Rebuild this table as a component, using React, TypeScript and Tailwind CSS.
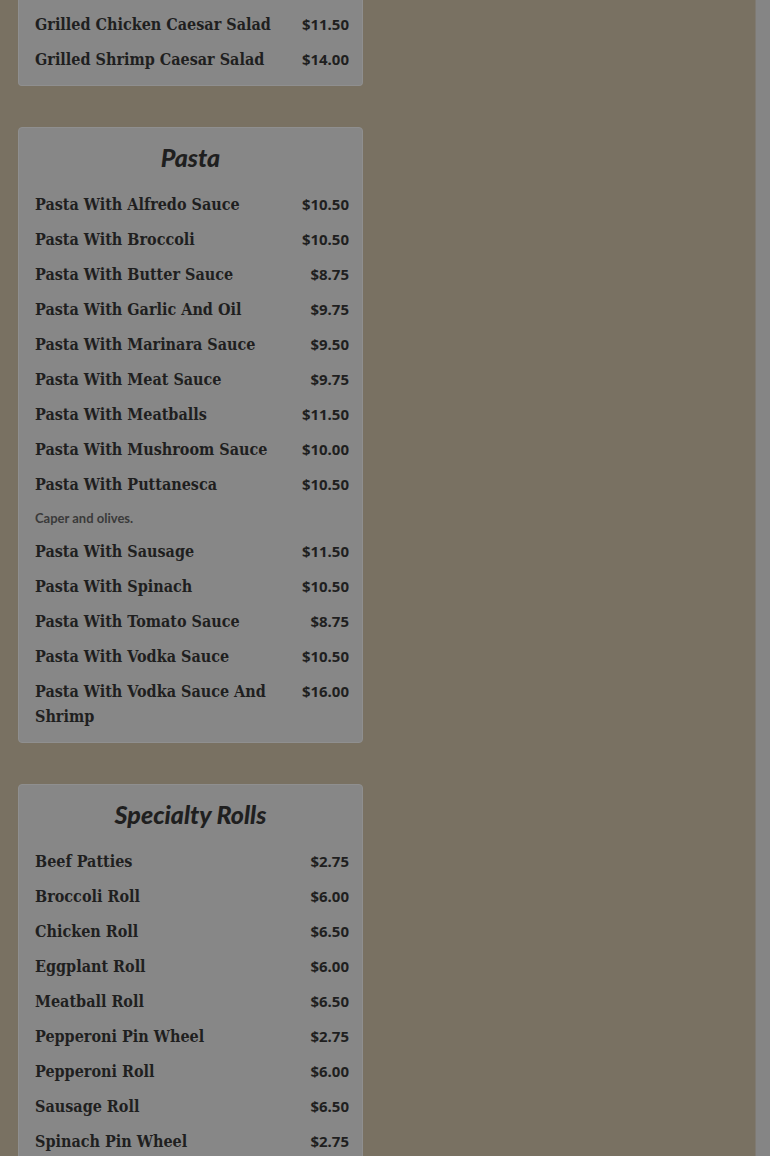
type Item = { name: string; price: string; note?: string };

const salads: Item[] = [
  { name: "Grilled Chicken Caesar Salad", price: "$11.50" },
  { name: "Grilled Shrimp Caesar Salad", price: "$14.00" },
];

const pasta: Item[] = [
  { name: "Pasta With Alfredo Sauce", price: "$10.50" },
  { name: "Pasta With Broccoli", price: "$10.50" },
  { name: "Pasta With Butter Sauce", price: "$8.75" },
  { name: "Pasta With Garlic And Oil", price: "$9.75" },
  { name: "Pasta With Marinara Sauce", price: "$9.50" },
  { name: "Pasta With Meat Sauce", price: "$9.75" },
  { name: "Pasta With Meatballs", price: "$11.50" },
  { name: "Pasta With Mushroom Sauce", price: "$10.00" },
  { name: "Pasta With Puttanesca", price: "$10.50", note: "Caper and olives." },
  { name: "Pasta With Sausage", price: "$11.50" },
  { name: "Pasta With Spinach", price: "$10.50" },
  { name: "Pasta With Tomato Sauce", price: "$8.75" },
  { name: "Pasta With Vodka Sauce", price: "$10.50" },
  { name: "Pasta With Vodka Sauce And Shrimp", price: "$16.00" },
];

const rolls: Item[] = [
  { name: "Beef Patties", price: "$2.75" },
  { name: "Broccoli Roll", price: "$6.00" },
  { name: "Chicken Roll", price: "$6.50" },
  { name: "Eggplant Roll", price: "$6.00" },
  { name: "Meatball Roll", price: "$6.50" },
  { name: "Pepperoni Pin Wheel", price: "$2.75" },
  { name: "Pepperoni Roll", price: "$6.00" },
  { name: "Sausage Roll", price: "$6.50" },
  { name: "Spinach Pin Wheel", price: "$2.75" },
];

const MenuRows = ({ items }: { items: Item[] }) => (
  <>
    {items.map((it, i) => (
      <div key={i}>
        <div className="flex justify-between gap-4 mb-[10px]">
          <p className="text-[16px] leading-[25px] font-bold text-[#1f1f1f] font-['DejaVu_Serif_Condensed','DejaVu_Serif',serif]">
            {it.name}
          </p>
          <p className="text-[15px] leading-[25px] font-bold text-[#1f1f1f] font-['Noto_Sans',sans-serif] shrink-0">
            {it.price}
          </p>
        </div>
        {it.note && (
          <p className="text-[13px] leading-[22px] mb-[10px] font-bold text-[#3a3a3a] font-['Lato',sans-serif]">
            {it.note}
          </p>
        )}
      </div>
    ))}
  </>
);

const Card = ({ title, items }: { title: string; items: Item[] }) => (
  <div className="bg-[#878787] border border-[#8f8f8f] rounded-[4px] pt-[12px] pb-[3px] pl-[16px] pr-[13px]">
    <h2 className="text-center ml-[-3px] text-[25px] leading-[34px] font-black italic text-[#1f1f1f] mb-[18px] font-['Lato',sans-serif]">
      {title}
    </h2>
    <MenuRows items={items} />
  </div>
);

export default function App() {
  return (
    <div className="flex min-h-[1156px] w-[770px] bg-[#797162] overflow-hidden">
      <div className="flex-1 pl-[18px]">
        <div className="w-[345px] bg-[#878787] border border-[#8f8f8f] border-t-0 rounded-b-[4px] pt-[12px] pb-[3px] pl-[16px] pr-[13px]">
          <MenuRows items={salads} />
        </div>
        <div className="w-[345px] flex flex-col gap-[41px] mt-[41px]">
          <Card title="Pasta" items={pasta} />
          <Card title="Specialty Rolls" items={rolls} />
        </div>
      </div>
      <div className="w-[15px] bg-[#858585] border-l border-[#7f7a72]" />
    </div>
  );
}
